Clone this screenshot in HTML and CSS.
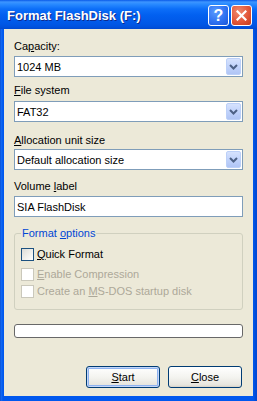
FILE: index.html
```html
<!DOCTYPE html>
<html>
<head>
    <title>Format FlashDisk (F:)</title>
    <meta charset="utf-8">
    <link rel="stylesheet" href="styles.css">
</head>
<body>
    <div class="window">
        <div class="titlebar">
            <span class="title">Format FlashDisk (F:)</span>
            <div class="caption-btns">
                <div class="cap-btn help">?</div>
                <div class="cap-btn close">
                    <svg width="11" height="11" viewBox="0 0 11 11">
                        <path d="M1.5 1.5 L9.5 9.5 M9.5 1.5 L1.5 9.5" stroke="#fff" stroke-width="2.2" stroke-linecap="square"/>
                    </svg>
                </div>
            </div>
        </div>

        <div class="dialog">
            <div class="label l1">Ca<u>p</u>acity:</div>
            <div class="combo c1">
                <span>1024 MB</span>
                <div class="drop"><svg width="9" height="6" viewBox="0 0 9 6"><path d="M1 1 L4.5 4.5 L8 1" fill="none" stroke="#4d6185" stroke-width="2"/></svg></div>
            </div>

            <div class="label l2"><u>F</u>ile system</div>
            <div class="combo c2">
                <span>FAT32</span>
                <div class="drop"><svg width="9" height="6" viewBox="0 0 9 6"><path d="M1 1 L4.5 4.5 L8 1" fill="none" stroke="#4d6185" stroke-width="2"/></svg></div>
            </div>

            <div class="label l3"><u>A</u>llocation unit size</div>
            <div class="combo c3">
                <span>Default allocation size</span>
                <div class="drop"><svg width="9" height="6" viewBox="0 0 9 6"><path d="M1 1 L4.5 4.5 L8 1" fill="none" stroke="#4d6185" stroke-width="2"/></svg></div>
            </div>

            <div class="label l4">Volume <u>l</u>abel</div>
            <div class="textbox">SIA FlashDisk</div>

            <fieldset class="options">
                <legend>Format <u>o</u>ptions</legend>
                <div class="check r1"><span class="box"></span><span><u>Q</u>uick Format</span></div>
                <div class="check r2 disabled"><span class="box"></span><span><u>E</u>nable Compression</span></div>
                <div class="check r3 disabled"><span class="box"></span><span>Create an <u>M</u>S-DOS startup disk</span></div>
            </fieldset>

            <div class="progress"></div>

            <div class="buttons">
                <div class="btn default"><span><u>S</u>tart</span></div>
                <div class="btn"><span><u>C</u>lose</span></div>
            </div>
        </div>
    </div>
</body>
</html>
```

FILE: styles.css
```css
* {
    margin: 0;
    padding: 0;
    box-sizing: border-box;
}

body {
    font-family: 'Liberation Sans', Arial, sans-serif;
    font-size: 11px;
    background: #0053e1;
}

.window {
    width: 257px;
    height: 401px;
    display: flex;
    flex-direction: column;
    background: linear-gradient(to right, #0845c8 0, #166cf2 1px, #0058ee 3px, #0058ee 253px, #0049d4 256px);
}

.titlebar {
    height: 29px;
    display: flex;
    align-items: center;
    justify-content: space-between;
    padding: 0 5px 0 7px;
    background: linear-gradient(to bottom, #0a5ae8 0, #3d95ff 2px, #2a8bff 4px, #0c6ef8 9px, #0260f0 15px, #0057e6 24px, #0051dd 27px, #0048cf 29px);
}

.title {
    color: #fff;
    font-weight: bold;
    font-size: 13px;
    text-shadow: 1px 1px 0 #0f2a8a;
    margin-top: 1px;
}

.caption-btns {
    display: flex;
    gap: 2px;
    margin-top: 2px;
}

.cap-btn {
    width: 21px;
    height: 21px;
    border: 1px solid #fff;
    border-radius: 3px;
    display: flex;
    align-items: center;
    justify-content: center;
    color: #fff;
}

.cap-btn.help {
    background: radial-gradient(circle at 35% 30%, #5a9bff 0, #2d6ff0 60%, #1a56d8 100%);
    font-weight: bold;
    font-size: 16px;
}

.cap-btn.close {
    background: radial-gradient(circle at 35% 30%, #f08a6e 0, #e2573a 55%, #c23a1c 100%);
}

.dialog {
    flex: 1;
    margin: 0 4px 5px 4px;
    background: #ece9d8;
    padding: 0 10px 0 10px;
    display: flex;
    flex-direction: column;
    color: #000;
}

.label {
    height: 13px;
    line-height: 13px;
}

.l1 { margin-top: 11px; }
.l2 { margin-top: 7px; }
.l3 { margin-top: 12px; }
.l4 { margin-top: 10px; }

.combo, .textbox {
    height: 21px;
    border: 1px solid #7f9db9;
    background: #fff;
    display: flex;
    align-items: center;
    justify-content: space-between;
    padding-left: 2px;
}

.c1 { margin-top: 3px; }
.c2 { margin-top: 4px; }
.c3 { margin-top: 2px; }
.textbox { margin-top: 3px; }

.drop {
    width: 15px;
    height: 17px;
    margin-right: 1px;
    border: 1px solid #bcd0f8;
    border-radius: 2px;
    background: linear-gradient(to bottom, #d6e2fd 0, #c1d3fb 50%, #b0c5f5 100%);
    display: flex;
    align-items: center;
    justify-content: center;
}

.options {
    margin-top: 10px;
    border: 1px solid #d0d0bf;
    border-radius: 3px;
    padding: 0 6px 11px 6px;
}

.options legend {
    color: #0046d5;
    padding: 0 1px;
    height: 13px;
    line-height: 13px;
}

.check {
    height: 13px;
    line-height: 13px;
    display: flex;
    align-items: center;
    gap: 3px;
}

.r1 { margin-top: 8px; }
.r2 { margin-top: 7px; }
.r3 { margin-top: 4px; }

.check .box {
    width: 13px;
    height: 13px;
    border: 1px solid #1c5180;
    background: linear-gradient(135deg, #dcdcd7 0, #f2f2ee 60%, #fff 100%);
}

.check.disabled {
    color: #aca899;
}

.check.disabled .box {
    border-color: #cac8bb;
    background: #fff;
}

.progress {
    margin-top: 14px;
    height: 14px;
    border: 1px solid #686868;
    border-radius: 3px;
    background: #fff;
}

.buttons {
    margin-top: 28px;
    display: flex;
    justify-content: flex-end;
    gap: 8px;
    padding-right: 1px;
}

.btn {
    width: 74px;
    height: 22px;
    border: 1px solid #003c74;
    border-radius: 3px;
    background: linear-gradient(to bottom, #fff 0, #f4f4f0 50%, #e6e5de 90%, #d6d0c5 100%);
    display: flex;
    align-items: center;
    justify-content: center;
}

.btn.default {
    box-shadow: inset 0 0 0 1px #c4d6f8, inset 0 0 0 2px #8db2f0;
}
```
